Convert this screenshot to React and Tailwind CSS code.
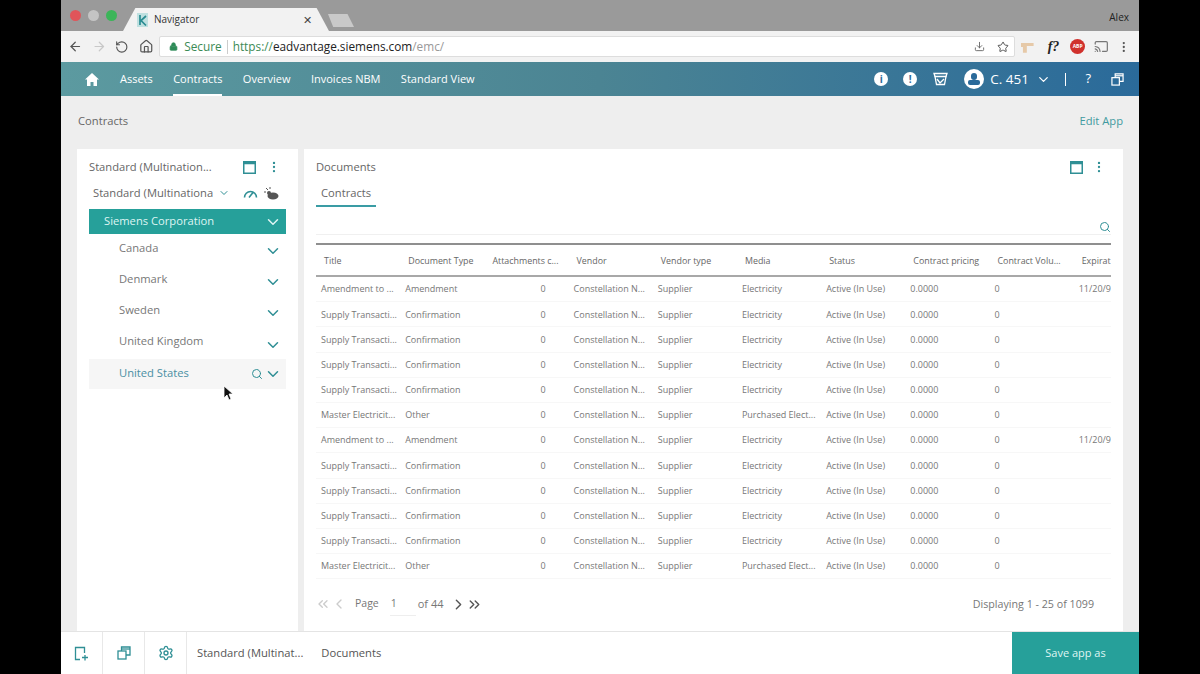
import {
  ArrowLeft, ArrowRight, RotateCw, Home, Lock, Download, Star, Cast, EllipsisVertical,
  ChevronDown, ChevronLeft, ChevronRight, ChevronsLeft, ChevronsRight, Search, Settings,
} from "lucide-react";

const amendment = ["Amendment to ...", "Amendment", "Electricity", "11/20/9"];
const supply = ["Supply Transacti...", "Confirmation", "Electricity", ""];
const master = ["Master Electricit...", "Other", "Purchased Elect...", ""];
const rows = [amendment, supply, supply, supply, supply, master, amendment, supply, supply, supply, supply, master];

const headers = [
  "Title", "Document Type", "Attachments c...", "Vendor", "Vendor type",
  "Media", "Status", "Contract pricing", "Contract Volu...", "Expirat",
];

const countries = ["Canada", "Denmark", "Sweden", "United Kingdom"];

const WindowIcon = () => (
  <svg width="13" height="13" viewBox="0 0 13 13" className="text-[#2f8f95]">
    <rect x="0.75" y="0.75" width="11.5" height="11.5" fill="none" stroke="currentColor" strokeWidth="1.5" />
    <rect x="0.75" y="0.75" width="11.5" height="2.5" fill="currentColor" />
  </svg>
);

const Overlap = ({ size, className }) => (
  <svg width={size} height={size} viewBox="0 0 14 14" fill="none" stroke="currentColor" strokeWidth="1.3" className={className}>
    <rect x="1" y="5" width="8" height="8" />
    <path d="M4.5 5V1H13v8H9" />
    <path d="M4.5 3h8.5" />
  </svg>
);

const Browser = () => (
  <>
    <div className="relative flex h-[31px] shrink-0 items-start bg-[#9a9a9a]">
      <div className="ml-[9px] mt-[10px] flex gap-[7px]">
        <span className="h-[11px] w-[11px] rounded-full bg-[#e0555a]" />
        <span className="h-[11px] w-[11px] rounded-full bg-[#c4c4c4]" />
        <span className="h-[11px] w-[11px] rounded-full bg-[#3cb559]" />
      </div>
      <div className="ml-[6px] mt-[8px] flex h-[23px] w-[206px] items-center bg-[#f2f2f2] pl-[14px] pr-[17px] [clip-path:polygon(0_100%,6%_0,94%_0,100%_100%)]">
        <svg width="11" height="14" viewBox="0 0 11 14">
          <rect width="11" height="14" fill="#bfe0e0" />
          <path d="M3 2v10M9 3 4 7.500l5 5" fill="none" stroke="#2a8c92" strokeWidth="1.7" />
        </svg>
        <span className="ml-[6px] text-[10px] text-[#333]">Navigator</span>
        <span className="ml-auto text-[11px] leading-none text-[#444]">✕</span>
      </div>
      <div className="-ml-[1px] mt-[14px] h-[13px] w-[26px] bg-[#c9c9c9] [clip-path:polygon(0_0,75%_0,100%_100%,20%_100%)]" />
      <span className="ml-auto mr-[10px] mt-[10px] text-[10px] text-[#222]">Alex</span>
    </div>

    <div className="flex h-[31px] shrink-0 items-center bg-[#f2f2f2] pl-[7px] pr-[8px]">
      <ArrowLeft size={15} className="text-[#555]" />
      <ArrowRight size={15} className="ml-[9px] text-[#c8c8c8]" />
      <RotateCw size={14} className="ml-[9px] -scale-x-100 text-[#555]" />
      <Home size={15} className="ml-[10px] text-[#555]" />
      <div className="ml-[6px] flex h-[21px] w-[882px] items-center rounded-[2px] border border-[#ddd] bg-white pl-[9px] pr-[5px] text-[11.8px]">
        <Lock size={9} fill="#2e8b57" className="text-[#2e8b57]" />
        <span className="ml-[6px] text-[#3b8a55]">Secure</span>
        <span className="ml-[5px] h-[14px] w-px bg-[#ccc]" />
        <span className="ml-[5px] text-[#3b8a55]">https://</span>
        <span className="text-[#222]">eadvantage.siemens.com</span>
        <span className="text-[#999]">/emc/</span>
        <Download size={11} className="ml-auto text-[#666]" />
        <Star size={12} className="ml-[12px] text-[#555]" />
      </div>
      <svg width="13" height="12" viewBox="0 0 13 12" className="ml-[6px]" fill="#e6c9a8">
        <path d="M0 2h13v3H6v7H2V6H0z" />
      </svg>
      <span className="ml-[14px] font-['Liberation_Serif',serif] text-[14px] font-bold italic leading-none text-[#222]">f?</span>
      <span className="ml-[11px] flex h-[15px] w-[15px] items-center justify-center rounded-full bg-[#d0312d] text-[5px] font-bold text-white">ABP</span>
      <Cast size={15} className="ml-[9px] text-[#777]" />
      <EllipsisVertical size={14} className="ml-[9px] text-[#555]" />
    </div>
  </>
);

const NavBar = () => (
  <div className="flex h-[34px] shrink-0 items-stretch bg-gradient-to-r from-[#5c9aa0] via-[#4b8493] to-[#2a6a9a] text-[11px] font-medium text-white">
    <div className="flex items-center pl-[24px]">
      <svg width="14" height="13" viewBox="0 0 14 13" fill="white">
        <path d="M7 0 0 6.500h2V13h3.500V9h3v4H12V6.500h2z" />
      </svg>
    </div>
    <div className="ml-[21px] flex items-stretch gap-[20.4px]">
      <span className="flex items-center">Assets</span>
      <span className="flex items-center border-b-[2px] border-white pt-[2px]">Contracts</span>
      <span className="flex items-center">Overview</span>
      <span className="flex items-center">Invoices NBM</span>
      <span className="flex items-center">Standard View</span>
    </div>
    <div className="ml-auto flex items-center pr-[15px]">
      <span className="flex h-[14px] w-[14px] items-center justify-center rounded-full bg-white text-[10px] font-bold text-[#2a6a9a]">i</span>
      <span className="ml-[15px] flex h-[14px] w-[14px] items-center justify-center rounded-full bg-white text-[10px] font-bold text-[#2a6a9a]">!</span>
      <svg width="15" height="14" viewBox="0 0 15 14" className="ml-[16px]" fill="none" stroke="white" strokeWidth="1.3">
        <path d="M1 1.500h13l-1 3-1.500 8h-8L2 4.500z" />
        <path d="M1.500 4.500h12M4 7l3 4 4-4" />
      </svg>
      <span className="relative ml-[16px] h-[20px] w-[20px] overflow-hidden rounded-full bg-white">
        <span className="absolute left-[7px] top-[4px] h-[7px] w-[6px] rounded-full bg-[#2a6a9a]" />
        <span className="absolute left-[4px] top-[11px] h-[5px] w-[12px] rounded-[2px] bg-[#2a6a9a]" />
      </span>
      <span className="ml-[6px] text-[13.5px] font-normal">C. 451</span>
      <ChevronDown size={15} className="ml-[7px]" />
      <span className="ml-[14px] h-[13px] w-[1.5px] bg-white" />
      <span className="ml-[19px] text-[13px] font-normal">?</span>
      <Overlap size={13} className="ml-[20px]" />
    </div>
  </div>
);

const LeftPanel = () => (
  <div className="relative flex w-[221px] shrink-0 flex-col bg-white px-[12px] pt-[9px]">
    <div className="flex h-[18px] items-center text-[11.2px] text-[#666]">
      <span>Standard (Multination...</span>
      <span className="ml-auto flex items-center gap-[11px] pr-[5px]">
        <WindowIcon />
        <EllipsisVertical size={14} className="text-[#2f8f95]" />
      </span>
    </div>
    <div className="mt-[8px] flex h-[18px] items-center pl-[4px] text-[11.2px] text-[#666]">
      <span>Standard (Multinationa</span>
      <ChevronDown size={12} className="ml-[5px] text-[#2f8f95]" />
      <svg width="15" height="10" viewBox="0 0 15 10" className="ml-[13px]" fill="none" stroke="#2f8f95" strokeWidth="1.6">
        <path d="M1.500 9.500a6 6 0 0 1 12 0M6 9.500l4-5" />
      </svg>
      <svg width="15" height="13" viewBox="0 0 15 13" className="ml-[6px]" fill="#555">
        <ellipse cx="9" cy="9" rx="5.500" ry="3.500" />
        <circle cx="5" cy="6" r="2" />
        <path d="M2 1l2 2M0 5h2M6 0v2" stroke="#555" />
      </svg>
    </div>
    <div className="mt-[7px] flex h-[25px] items-center justify-between bg-[#26a09a] pl-[15px] pr-[4px] text-[11.2px] font-medium text-[#dff5f3]">
      <span>Siemens Corporation</span>
      <ChevronDown size={18} />
    </div>
    {countries.map((name) => (
      <div key={name} className="flex h-[31.2px] items-center justify-between pl-[30px] pr-[4px] text-[11.2px] text-[#777]">
        <span className="-mt-[3px]">{name}</span>
        <ChevronDown size={18} className="mt-[3px] text-[#2f8f95]" />
      </div>
    ))}
    <div className="flex h-[30px] items-center bg-[#f6f6f6] pl-[30px] pr-[4px] text-[11.2px] text-[#4a8fa3]">
      <span>United States</span>
      <Search size={12} className="ml-auto text-[#2f8f95]" />
      <ChevronDown size={18} className="ml-[1px] text-[#2f8f95]" />
    </div>
    {/* mouse cursor */}
    <svg width="11" height="16" viewBox="0 0 11 16" className="absolute left-[146px] top-[236px]">
      <path d="M1 1v12l3-3 2 5 2-1-2-5h4z" fill="#111" stroke="white" strokeWidth="0.8" />
    </svg>
  </div>
);

const Documents = () => (
  <div className="flex min-w-0 flex-1 flex-col bg-white pl-[12px] pr-[12px] pt-[9px]">
    <div className="flex h-[18px] items-center text-[11.2px] text-[#666]">
      <span>Documents</span>
      <span className="ml-auto flex items-center gap-[9px] pr-[5px]">
        <WindowIcon />
        <EllipsisVertical size={14} className="text-[#2f8f95]" />
      </span>
    </div>
    <div className="mt-[7px] flex">
      <span className="border-b-[2px] border-[#3a9ca4] px-[5px] pb-[2px] text-[11.2px] leading-[20px] text-[#666]">Contracts</span>
    </div>
    <div className="mt-[12px] flex h-[16px] items-center justify-end border-b border-[#f0f0f0]">
      <Search size={12} className="text-[#2f8f95]" />
    </div>
    <div className="mt-[8px] h-[346px] overflow-hidden border-t-[2px] border-[#8f8f8f]">
      <div className="grid h-[32px] grid-cols-[repeat(10,84.2px)] items-center border-b-[2px] border-[#a8a8a8] pt-[1px] text-[8.9px] text-[#666]">
        {headers.map((h) => (
          <span key={h} className="whitespace-nowrap pl-[8px]">{h}</span>
        ))}
      </div>
      {rows.map((r, i) => (
        <div key={i} className="grid h-[25.2px] grid-cols-[repeat(10,84.2px)] items-center border-b border-[#f7f7f7] text-[9px] text-[#777]">
          <span className="whitespace-nowrap pl-[5px]">{r[0]}</span>
          <span className="whitespace-nowrap pl-[5px]">{r[1]}</span>
          <span className="pr-[23px] text-right">0</span>
          <span className="whitespace-nowrap pl-[5px]">Constellation N...</span>
          <span className="pl-[5px]">Supplier</span>
          <span className="whitespace-nowrap pl-[5px]">{r[2]}</span>
          <span className="whitespace-nowrap pl-[5px]">Active (In Use)</span>
          <span className="pl-[5px]">0.0000</span>
          <span className="pl-[5px]">0</span>
          <span className="whitespace-nowrap pl-[5px]">{r[3]}</span>
        </div>
      ))}
    </div>
    <div className="flex h-[30px] items-center text-[10.5px] text-[#777]">
      <ChevronsLeft size={16} className="-ml-[1px] text-[#ccc]" />
      <ChevronLeft size={16} className="text-[#ccc]" />
      <span className="ml-[8px]">Page</span>
      <span className="ml-[11px] w-[26px] border-b border-[#eee] py-[4px] pl-[1px]">1</span>
      <span className="ml-[2px] text-[11px]">of 44</span>
      <ChevronRight size={17} className="ml-[6px] text-[#555]" />
      <ChevronsRight size={17} className="ml-[-1px] text-[#555]" />
      <span className="ml-auto pr-[17px] text-[10.7px]">Displaying 1 - 25 of 1099</span>
    </div>
  </div>
);

const BottomBar = () => (
  <div className="flex h-[43px] shrink-0 items-stretch border-t border-[#e4e4e4] bg-white text-[11.2px] text-[#555]">
    <div className="flex w-[42px] items-center justify-center border-r border-[#e8e8e8]">
      <svg width="15" height="15" viewBox="0 0 15 15" fill="none" stroke="#2f8f95" strokeWidth="1.3">
        <path d="M6 13.500H1.500v-12h9V7M11 9v5.500M8 11.500h6" />
      </svg>
    </div>
    <div className="flex w-[42px] items-center justify-center border-r border-[#e8e8e8]">
      <Overlap size={14} className="text-[#2f8f95]" />
    </div>
    <div className="flex w-[42px] items-center justify-center border-r border-[#e8e8e8]">
      <Settings size={16} className="text-[#2f8f95]" />
    </div>
    <span className="ml-[10px] flex items-center">Standard (Multinat...</span>
    <span className="ml-[18px] flex items-center">Documents</span>
    <div className="ml-auto flex w-[127px] items-center justify-center bg-[#26a09a] text-[11px] font-medium text-[#dff5f3]">
      Save app as
    </div>
  </div>
);

export default function App() {
  return (
    <div className="flex h-[674px] w-[1200px] justify-center overflow-hidden bg-black font-['Open_Sans',sans-serif]">
      <div className="flex w-[1078px] flex-col">
        <Browser />
        <NavBar />
        <div className="flex min-h-0 flex-1 flex-col bg-[#eeeeee] pl-[16px] pr-[16px]">
          <div className="flex h-[53px] shrink-0 items-center justify-between pb-[2px] pl-[1px] text-[11.2px] text-[#666]">
            <span>Contracts</span>
            <span className="text-[#3f9aa0]">Edit App</span>
          </div>
          <div className="flex min-h-0 flex-1 gap-[6px]">
            <LeftPanel />
            <Documents />
          </div>
        </div>
        <BottomBar />
      </div>
    </div>
  );
}
